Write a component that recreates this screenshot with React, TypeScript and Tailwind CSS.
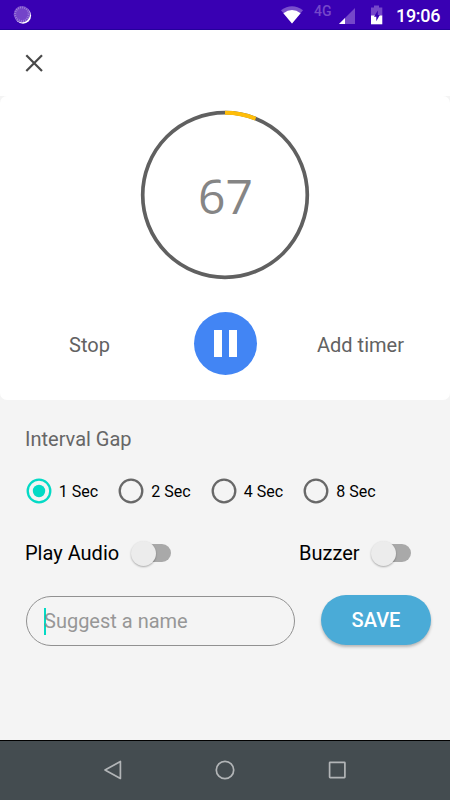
import React from 'react';

function StatusBar() {
  return (
    <header className="flex h-[30px] w-full items-center border-b border-[#25009b] bg-[#3900b3] text-white">
      <svg className="ml-[13px] h-[20px] w-[20px]" viewBox="0 0 20 20">
        <circle cx="10" cy="10.6" r="8.1" fill="#fff" />
        <circle cx="8.9" cy="9.2" r="8.2" fill="#7444c9" />
        <circle cx="8.9" cy="9.2" r="6.8" fill="none" stroke="#9c7cd9" strokeWidth="2" strokeDasharray="1 1.14" />
      </svg>
      <svg className="ml-[248px] h-[18px] w-[22px]" viewBox="0 0 22 18">
        <path d="M0 4.2Q11-3.8 22 4.2L11 17.4Z" fill="#7a50cc" />
        <path d="M2.4 7.2Q11 1 19.6 7.2L11 17.4Z" fill="#fff" />
      </svg>
      <span className="-mt-[7px] ml-[11px] w-[20px] font-['Roboto',sans-serif] text-[14px] leading-[16px] font-medium text-[#7547ca]">4G</span>
      <svg className="mt-[2px] ml-[5px] h-[16px] w-[16px]" viewBox="0 0 16 16">
        <path d="M16 0V16H0Z" fill="#7547ca" />
        <path d="M6 10V16H0Z" fill="#fff" />
      </svg>
      <svg className="mt-[1px] ml-[16px] h-[20px] w-[12px]" viewBox="0 0 12 20">
        <path d="M3 0.5H8V2.5H11.3V11H0V2.5H3Z" fill="#7547ca" />
        <path d="M0 10.5H11.3V19.3H0Z" fill="#fff" />
        <path d="M6.8 5.5L3 11.8H5.3V16.2L8.8 9.9H6.8Z" fill="#3900b3" />
      </svg>
      <span className="mt-[2px] ml-[13px] font-['Roboto',sans-serif] text-[18px] leading-[28px] font-medium tracking-[-0.3px]">19:06</span>
    </header>
  );
}

function Dial() {
  return (
    <div className="grid h-[170px] w-[170px] place-items-center">
      <svg className="col-start-1 row-start-1 h-[170px] w-[170px]" viewBox="0 0 170 170">
        <circle cx="85" cy="85" r="82.3" fill="none" stroke="#606060" strokeWidth="3.7" />
        <path d="M85 2.7A82.3 82.3 0 0 1 115.6 8.6" fill="none" stroke="#ffbd08" strokeWidth="3.9" />
      </svg>
      <span className="col-start-1 row-start-1 mt-[2px] ml-px font-['Open_Sans',sans-serif] text-[48px] leading-[64px] text-[#858585]">67</span>
    </div>
  );
}

function Radio({ label, checked = false }: { label: string; checked?: boolean }) {
  return (
    <label className="flex w-[92.5px] items-center">
      <svg className="h-[26px] w-[26px] shrink-0" viewBox="0 0 26 26">
        <circle cx="13" cy="13" r="11.3" fill="none" stroke={checked ? '#03dac5' : '#686868'} strokeWidth="2.3" />
        {checked && <circle cx="13" cy="13" r="6.2" fill="#03dac5" />}
      </svg>
      <span className="mt-[2px] ml-[7px] text-[16px] leading-[24px] tracking-[0.05px] whitespace-nowrap text-black">{label}</span>
    </label>
  );
}

function Toggle() {
  return (
    <span className="flex h-[26px] w-[40px] items-center">
      <span className="z-10 h-[25px] w-[25px] shrink-0 rounded-full bg-[#ececec] shadow-[0_1px_2px_rgba(0,0,0,0.3)]" />
      <span className="-ml-[14px] h-[18px] w-[29px] shrink-0 rounded-full bg-[#a9a9a9]" />
    </span>
  );
}

export default function App() {
  return (
    <div className="flex h-[800px] w-[450px] flex-col overflow-hidden bg-[#f4f4f4] font-['Roboto',sans-serif]">
      <StatusBar />
      <div className="flex h-[66px] items-center bg-white pl-[25px]">
        <svg className="h-[18px] w-[18px]" viewBox="0 0 18 18">
          <path d="M1.3 1.3L17 17M17 1.3L1.3 17" stroke="#494949" strokeWidth="2.2" />
        </svg>
      </div>
      <section className="flex h-[304px] flex-col items-center rounded-[7px] bg-white pt-[14px]">
        <Dial />
        <div className="mt-[32px] grid w-full grid-cols-[179px_92px_179px] items-center justify-items-center">
          <button className="mt-[2px] text-[20px] leading-[28px] text-[#626262]">Stop</button>
          <button aria-label="Pause" className="flex h-[63px] w-[63px] items-center justify-center gap-[7px] rounded-full bg-[#4285f4]">
            <span className="h-[27px] w-[8px] bg-white" />
            <span className="h-[27px] w-[8px] bg-white" />
          </button>
          <button className="mt-[2px] text-[20px] leading-[28px] text-[#626262]">Add timer</button>
        </div>
      </section>
      <main className="flex h-[340px] flex-col pl-[25px]">
        <h2 className="mt-[25px] text-[20px] leading-[28px] text-[#666666]">Interval Gap</h2>
        <div className="mt-[25px] ml-[0.7px] flex">
          <Radio label="1 Sec" checked />
          <Radio label="2 Sec" />
          <Radio label="4 Sec" />
          <Radio label="8 Sec" />
        </div>
        <div className="mt-[36px] flex h-[26px] items-center text-[20px] text-black">
          <span className="w-[106px] whitespace-nowrap">Play Audio</span>
          <Toggle />
          <span className="ml-[128px] w-[72px]">Buzzer</span>
          <Toggle />
        </div>
        <div className="mt-[29px] flex">
          <div className="mt-[1px] ml-px flex h-[50px] w-[269px] items-center rounded-full border border-[#919191] pl-[17px]">
            <span className="h-[27px] w-[2px] bg-[#03dac5]" />
            <span className="-ml-[2px] text-[20px] leading-[28px] text-[#979797]">Suggest a name</span>
          </div>
          <button className="ml-[26px] h-[50px] w-[110px] rounded-full bg-[#4aabd7] text-[20px] font-medium text-white shadow-[0_2px_3px_rgba(0,0,0,0.25)]">SAVE</button>
        </div>
      </main>
      <nav className="flex h-[60px] items-center justify-center gap-[92px] border-t border-black bg-[#444c50] pb-px">
        <svg className="h-[20px] w-[20px]" viewBox="0 0 20 20" fill="none" stroke="#b2b5b7" strokeWidth="1.7">
          <path d="M17.4 1.5V18.5L2 10Z" strokeLinejoin="round" />
        </svg>
        <svg className="h-[20px] w-[20px]" viewBox="0 0 20 20" fill="none" stroke="#b2b5b7" strokeWidth="1.7">
          <circle cx="10" cy="10" r="8.7" />
        </svg>
        <svg className="h-[20px] w-[20px]" viewBox="0 0 20 20" fill="none" stroke="#b2b5b7" strokeWidth="1.7">
          <rect x="2.6" y="2.3" width="15.3" height="15.3" rx="0.5" />
        </svg>
      </nav>
    </div>
  );
}
